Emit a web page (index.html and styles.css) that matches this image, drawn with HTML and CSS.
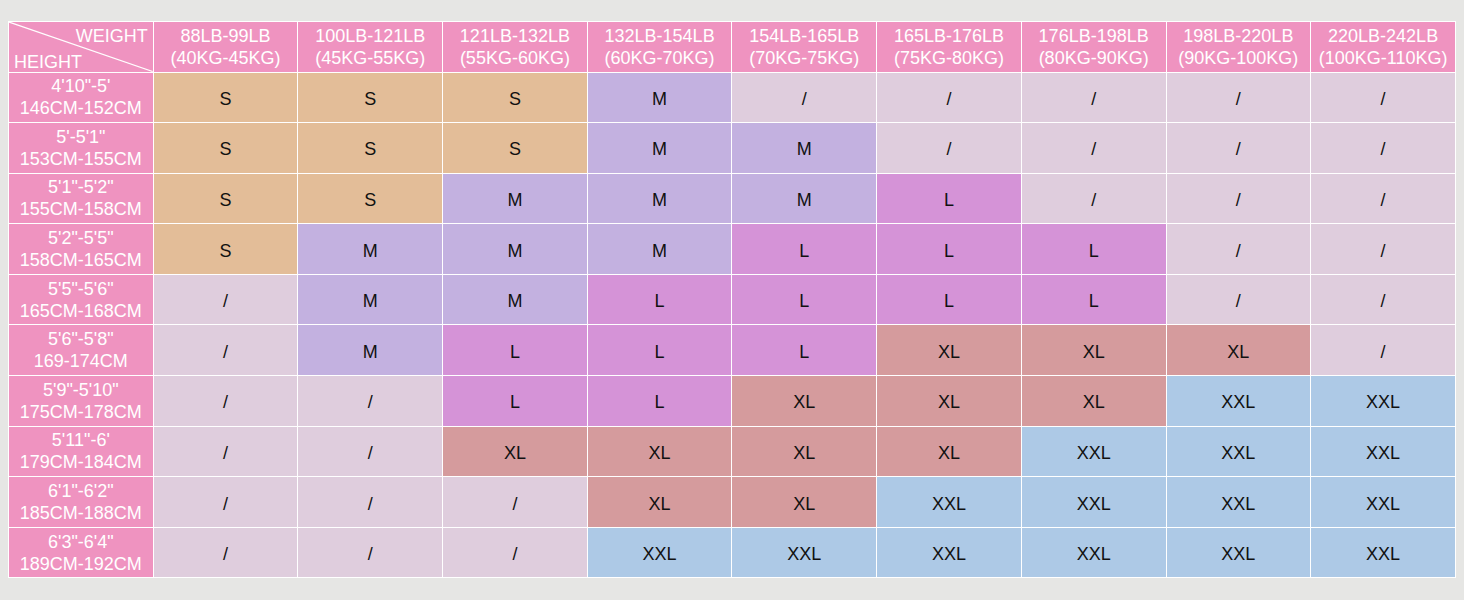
FILE: index.html
```html
<!DOCTYPE html>
<html>
<head>
<meta charset="utf-8">
<link rel="stylesheet" href="styles.css">
</head>
<body>
<table class="chart">
<tr class="head">
<th class="corner"><svg class="diag" viewBox="0 0 100 100" preserveAspectRatio="none"><line x1="0" y1="0" x2="100" y2="100" stroke="#fff" stroke-width="1.2" vector-effect="non-scaling-stroke"/></svg><span class="w">WEIGHT</span><span class="h">HEIGHT</span></th>
<th>88LB-99LB<br>(40KG-45KG)</th>
<th>100LB-121LB<br>(45KG-55KG)</th>
<th>121LB-132LB<br>(55KG-60KG)</th>
<th>132LB-154LB<br>(60KG-70KG)</th>
<th>154LB-165LB<br>(70KG-75KG)</th>
<th>165LB-176LB<br>(75KG-80KG)</th>
<th>176LB-198LB<br>(80KG-90KG)</th>
<th>198LB-220LB<br>(90KG-100KG)</th>
<th>220LB-242LB<br>(100KG-110KG)</th>
</tr>
<tr><th>4'10"-5'<br>146CM-152CM</th><td class="s">S</td><td class="s">S</td><td class="s">S</td><td class="m">M</td><td class="n">/</td><td class="n">/</td><td class="n">/</td><td class="n">/</td><td class="n">/</td></tr>
<tr><th>5'-5'1"<br>153CM-155CM</th><td class="s">S</td><td class="s">S</td><td class="s">S</td><td class="m">M</td><td class="m">M</td><td class="n">/</td><td class="n">/</td><td class="n">/</td><td class="n">/</td></tr>
<tr><th>5'1"-5'2"<br>155CM-158CM</th><td class="s">S</td><td class="s">S</td><td class="m">M</td><td class="m">M</td><td class="m">M</td><td class="l">L</td><td class="n">/</td><td class="n">/</td><td class="n">/</td></tr>
<tr><th>5'2"-5'5"<br>158CM-165CM</th><td class="s">S</td><td class="m">M</td><td class="m">M</td><td class="m">M</td><td class="l">L</td><td class="l">L</td><td class="l">L</td><td class="n">/</td><td class="n">/</td></tr>
<tr><th>5'5"-5'6"<br>165CM-168CM</th><td class="n">/</td><td class="m">M</td><td class="m">M</td><td class="l">L</td><td class="l">L</td><td class="l">L</td><td class="l">L</td><td class="n">/</td><td class="n">/</td></tr>
<tr><th>5'6"-5'8"<br>169-174CM</th><td class="n">/</td><td class="m">M</td><td class="l">L</td><td class="l">L</td><td class="l">L</td><td class="xl">XL</td><td class="xl">XL</td><td class="xl">XL</td><td class="n">/</td></tr>
<tr><th>5'9"-5'10"<br>175CM-178CM</th><td class="n">/</td><td class="n">/</td><td class="l">L</td><td class="l">L</td><td class="xl">XL</td><td class="xl">XL</td><td class="xl">XL</td><td class="xxl">XXL</td><td class="xxl">XXL</td></tr>
<tr><th>5'11"-6'<br>179CM-184CM</th><td class="n">/</td><td class="n">/</td><td class="xl">XL</td><td class="xl">XL</td><td class="xl">XL</td><td class="xl">XL</td><td class="xxl">XXL</td><td class="xxl">XXL</td><td class="xxl">XXL</td></tr>
<tr><th>6'1"-6'2"<br>185CM-188CM</th><td class="n">/</td><td class="n">/</td><td class="n">/</td><td class="xl">XL</td><td class="xl">XL</td><td class="xxl">XXL</td><td class="xxl">XXL</td><td class="xxl">XXL</td><td class="xxl">XXL</td></tr>
<tr><th>6'3"-6'4"<br>189CM-192CM</th><td class="n">/</td><td class="n">/</td><td class="n">/</td><td class="xxl">XXL</td><td class="xxl">XXL</td><td class="xxl">XXL</td><td class="xxl">XXL</td><td class="xxl">XXL</td><td class="xxl">XXL</td></tr>
</table>
</body>
</html>
```
FILE: styles.css
```css
html, body {
  margin: 0;
  padding: 0;
  background: #e6e6e4;
}
body {
  padding: 21px 8px 0 8px;
  font-family: "Liberation Sans", Arial, sans-serif;
}
.chart {
  border-collapse: collapse;
  table-layout: fixed;
  width: 1448px;
}
.chart th, .chart td {
  border: 1px solid #ffffff;
  height: 49.6px;
  padding: 0;
  text-align: center;
  vertical-align: middle;
}
.chart th {
  background: #ef93c0;
  color: #ffffff;
  font-weight: normal;
  font-size: 18px;
  line-height: 22px;
}
.chart td {
  color: #111;
  font-size: 18px;
  line-height: 22px;
  height: 46.6px;
  padding-top: 3px;
}
.chart .head th { height: 49.5px; }
.corner {
  position: relative;
  text-align: left;
}
.diag {
  position: absolute;
  left: 0;
  top: 0;
  width: 100%;
  height: 100%;
}
.corner .w {
  position: absolute;
  right: 5px;
  top: 3px;
}
.corner .h {
  position: absolute;
  left: 5px;
  bottom: -1px;
}
.s { background: #e3bd98; }
.m { background: #c3b1e0; }
.n { background: #dfcddd; }
.l { background: #d593d7; }
.xl { background: #d59b9d; }
.xxl { background: #adc9e6; }
```
